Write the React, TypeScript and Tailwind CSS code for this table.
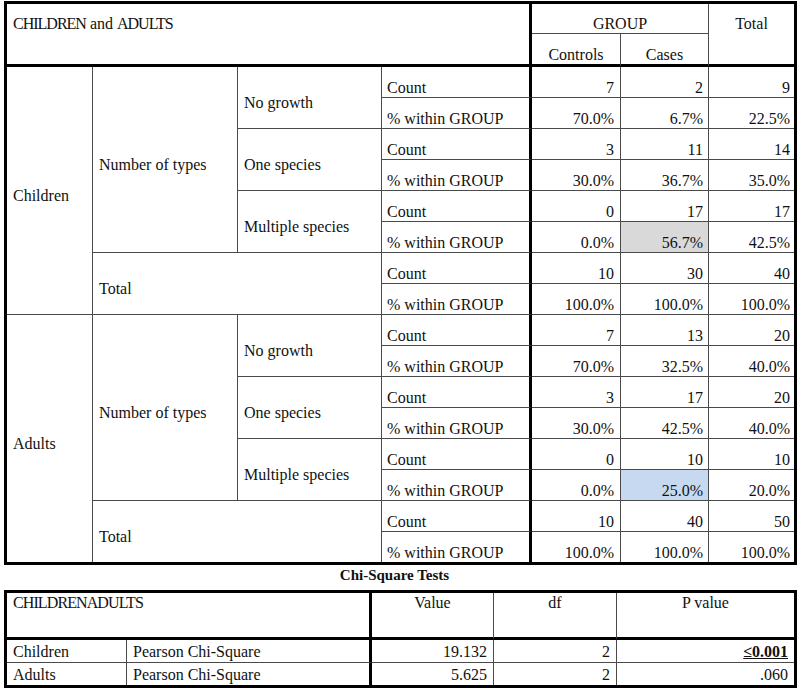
import React from "react";

const T = "border-[#4a4a4a]";

type CellProps = {
  className?: string;
  children?: React.ReactNode;
};

function C({ className = "", children }: CellProps) {
  return <div className={`flex min-w-0 ${T} ${className}`}>{children}</div>;
}

type Group = {
  name: string;
  rows: { label: string; vals: string[][] }[];
  total: string[][];
  highlight: string;
  last: boolean;
};

const groups: Group[] = [
  {
    name: "Children",
    rows: [
      { label: "No growth", vals: [["7", "2", "9"], ["70.0%", "6.7%", "22.5%"]] },
      { label: "One species", vals: [["3", "11", "14"], ["30.0%", "36.7%", "35.0%"]] },
      { label: "Multiple species", vals: [["0", "17", "17"], ["0.0%", "56.7%", "42.5%"]] },
    ],
    total: [["10", "30", "40"], ["100.0%", "100.0%", "100.0%"]],
    highlight: "bg-[#d9d9d9]",
    last: false,
  },
  {
    name: "Adults",
    rows: [
      { label: "No growth", vals: [["7", "13", "20"], ["70.0%", "32.5%", "40.0%"]] },
      { label: "One species", vals: [["3", "17", "20"], ["30.0%", "42.5%", "40.0%"]] },
      { label: "Multiple species", vals: [["0", "10", "10"], ["0.0%", "25.0%", "20.0%"]] },
    ],
    total: [["10", "40", "50"], ["100.0%", "100.0%", "100.0%"]],
    highlight: "bg-[#c6d9f1]",
    last: true,
  },
];

function ValueRow({
  vals,
  isLastRow,
  highlightCases,
  highlight,
}: {
  vals: string[];
  isLastRow: boolean;
  highlightCases: boolean;
  highlight: string;
}) {
  const b = isLastRow ? "" : "border-b";
  return (
    <>
      <C className={`${b} border-r-[3px] border-r-black items-end pl-[5px]`}>
        {vals[0].includes("%") ? "% within GROUP" : "Count"}
      </C>
      <C className={`${b} border-r items-end justify-end pr-[6px]`}>{vals[0]}</C>
      <C className={`${b} border-r items-end justify-end pr-[5px] ${highlightCases ? highlight : ""}`}>
        {vals[1]}
      </C>
      <C className={`${b} items-end justify-end pr-[4px]`}>{vals[2]}</C>
    </>
  );
}

export default function App() {
  return (
    <div className="w-[803px] h-[694px] bg-white text-[#111] font-['Liberation_Serif',serif] text-[16px] leading-[18px]">
      <div className="pt-[1px] pl-[4px]">
        <div className="w-[793px] border-[3px] border-black grid grid-cols-[86px_145px_144px_150px_89px_88px_85px] grid-rows-[30px_33px_repeat(15,31px)_30px]">
          {/* header */}
          <C className="col-span-4 row-span-2 border-r-[3px] border-r-black border-b-[3px] border-b-black pl-[6px] pt-[11px] whitespace-pre">
            <span className="tracking-[-1px]">CHILDREN</span> and <span className="tracking-[-1px]">ADULTS</span>
          </C>
          <C className="col-span-2 border-b border-r items-end justify-center">GROUP</C>
          <C className="row-span-2 border-b-[3px] border-b-black justify-center pt-[11px]">Total</C>
          <C className="border-r border-b-[3px] border-b-black items-end justify-center">Controls</C>
          <C className="border-r border-b-[3px] border-b-black items-end justify-center">Cases</C>

          {groups.map((g) => (
            <React.Fragment key={g.name}>
              <C className={`row-span-8 border-r ${g.last ? "" : "border-b"} items-center pt-[10px] pl-[6px]`}>
                {g.name}
              </C>
              <C className="row-span-6 border-r border-b items-center pt-[10px] pl-[6px]">Number of types</C>
              {g.rows.map((r, ri) => (
                <React.Fragment key={r.label}>
                  <C className="row-span-2 border-r border-b items-center pt-[10px] pl-[6px]">{r.label}</C>
                  <ValueRow vals={r.vals[0]} isLastRow={false} highlightCases={false} highlight={g.highlight} />
                  <ValueRow
                    vals={r.vals[1]}
                    isLastRow={false}
                    highlightCases={ri === 2}
                    highlight={g.highlight}
                  />
                </React.Fragment>
              ))}
              <C className={`col-span-2 row-span-2 border-r ${g.last ? "" : "border-b"} items-center pt-[10px] pl-[6px]`}>
                Total
              </C>
              <ValueRow vals={g.total[0]} isLastRow={false} highlightCases={false} highlight={g.highlight} />
              <ValueRow vals={g.total[1]} isLastRow={g.last} highlightCases={false} highlight={g.highlight} />
            </React.Fragment>
          ))}
        </div>

        <div className="h-[25px] w-[793px] text-center pr-[12px] text-[15px] leading-[20px] font-bold">
          Chi-Square Tests
        </div>

        <div className="w-[793px] border-[3px] border-black grid grid-cols-[120px_245px_122px_123px_177px] grid-rows-[47px_23px_22px]">
          <C className="col-span-2 border-r-[3px] border-r-black border-b-[3px] border-b-black pl-[6px] pt-[1px] tracking-[-0.9px]">
            CHILDRENADULTS
          </C>
          <C className="border-r border-b-[3px] border-b-black justify-center pt-[1px]">Value</C>
          <C className="border-r border-b-[3px] border-b-black justify-center pt-[1px]">df</C>
          <C className="border-b-[3px] border-b-black justify-center pt-[1px]">P value</C>

          <C className="border-r border-b pl-[6px] pt-[3px]">Children</C>
          <C className="border-r-[3px] border-r-black border-b pl-[6px] pt-[3px]">Pearson Chi-Square</C>
          <C className="border-r border-b justify-end pr-[6px] pt-[3px]">19.132</C>
          <C className="border-r border-b justify-end pr-[6px] pt-[3px]">2</C>
          <C className="border-b justify-end pr-[6px] pt-[3px]">
            <span className="font-bold underline">≤0.001</span>
          </C>

          <C className="border-r pl-[6px] pt-[3px]">Adults</C>
          <C className="border-r-[3px] border-r-black pl-[6px] pt-[3px]">Pearson Chi-Square</C>
          <C className="border-r justify-end pr-[6px] pt-[3px]">5.625</C>
          <C className="border-r justify-end pr-[6px] pt-[3px]">2</C>
          <C className="justify-end pr-[6px] pt-[3px]">.060</C>
        </div>
      </div>
    </div>
  );
}
